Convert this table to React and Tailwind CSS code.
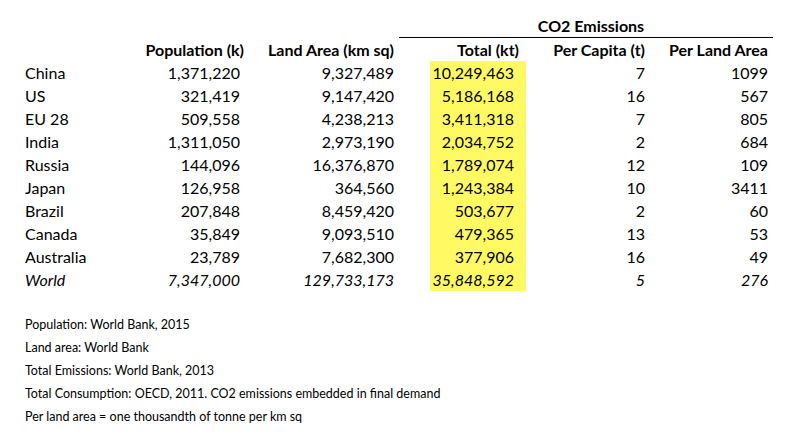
import React from "react";

const rows = [
  ["China", "1,371,220", "9,327,489", "10,249,463", "7", "1099"],
  ["US", "321,419", "9,147,420", "5,186,168", "16", "567"],
  ["EU 28", "509,558", "4,238,213", "3,411,318", "7", "805"],
  ["India", "1,311,050", "2,973,190", "2,034,752", "2", "684"],
  ["Russia", "144,096", "16,376,870", "1,789,074", "12", "109"],
  ["Japan", "126,958", "364,560", "1,243,384", "10", "3411"],
  ["Brazil", "207,848", "8,459,420", "503,677", "2", "60"],
  ["Canada", "35,849", "9,093,510", "479,365", "13", "53"],
  ["Australia", "23,789", "7,682,300", "377,906", "16", "49"],
];

const world = ["World", "7,347,000", "129,733,173", "35,848,592", "5", "276"];

const notes = [
  "Population: World Bank, 2015",
  "Land area: World Bank",
  "Total Emissions: World Bank, 2013",
  "Total Consumption: OECD, 2011. CO2 emissions embedded in final demand",
  "Per land area = one thousandth of tonne per km sq",
];

const cols = "grid grid-cols-[115px_100px_190px_96px_119px_123px]";

const Row = ({ cells, italic }) => (
  <div className={`${cols} h-[23px] items-center ${italic ? "italic" : ""}`}>
    <div>{cells[0]}</div>
    <div className="text-right">{cells[1]}</div>
    <div className="text-right pr-[36px]">{cells[2]}</div>
    <div className="text-right pr-[12px] bg-[#fffa64] h-full flex items-center justify-end">{cells[3]}</div>
    <div className="text-right">{cells[4]}</div>
    <div className="text-right">{cells[5]}</div>
  </div>
);

export default function App() {
  return (
    <div
      className="w-[786px] h-[442px] bg-white text-black pl-[25px] pt-[15px] text-[16px] leading-none"
      style={{ fontFamily: "Lato, 'Open Sans', sans-serif" }}
    >
      <div className="flex h-[23px]">
        <div className="w-[374px]" />
        <div className="w-[374px] border-b border-black flex items-center justify-center pl-[10px] font-bold">
          CO2 Emissions
        </div>
      </div>
      <div className={`${cols} h-[23px] items-center font-bold`}>
        <div />
        <div className="text-right whitespace-nowrap -mr-[4px]">Population (k)</div>
        <div className="text-right pr-[36px] whitespace-nowrap">Land Area (km sq)</div>
        <div className="text-right pr-[7px] whitespace-nowrap">Total (kt)</div>
        <div className="text-right whitespace-nowrap">Per Capita (t)</div>
        <div className="text-right whitespace-nowrap">Per Land Area</div>
      </div>
      {rows.map((r) => (
        <Row key={r[0]} cells={r} />
      ))}
      <Row cells={world} italic />
      <div className="mt-[23px] text-[12.5px]">
        {notes.map((n) => (
          <div key={n} className="h-[23px] flex items-center">
            {n}
          </div>
        ))}
      </div>
    </div>
  );
}
